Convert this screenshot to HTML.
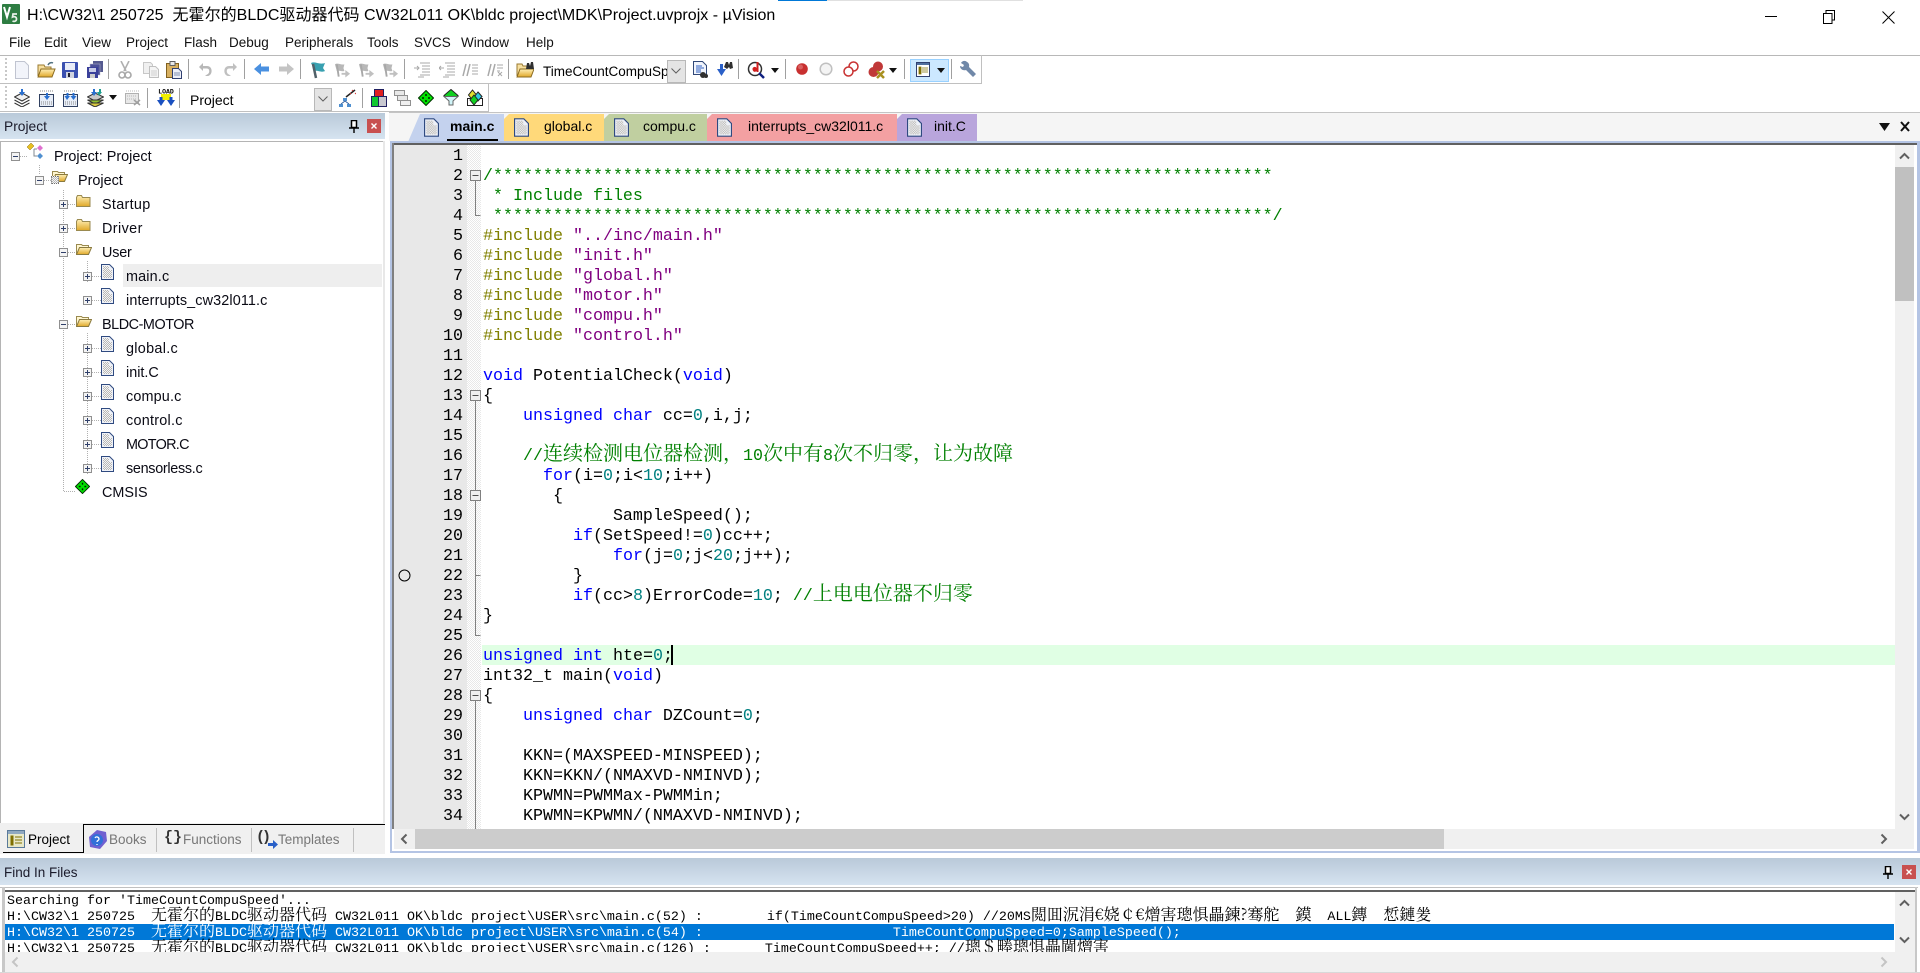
<!DOCTYPE html>
<html><head><meta charset="utf-8"><title>µVision</title>
<style>
html,body{margin:0;padding:0;background:#fff}
#r{position:relative;width:1920px;height:973px;overflow:hidden;background:#fff;font-family:"Liberation Sans","Noto Sans CJK SC",sans-serif;color:#000}
#r div,#r span.a,#r svg.a{position:absolute}
.t{white-space:pre;line-height:20px;height:20px}
.m{font-size:13.5px;top:33px;color:#111}
.sep{width:1px;background:#a0a0a0}
.tr{font-size:14.4px;color:#0a0a14;margin-top:1px}
.tb{font-size:14px;top:113px;height:28px;line-height:27px}
.code{left:483px;width:1412px;height:20px;line-height:20px;margin-top:2px;font-family:"Liberation Mono",monospace;font-size:16.67px;white-space:pre;color:#000}
.ln{left:420px;width:43px;text-align:right;height:20px;line-height:20px;margin-top:2px;font-family:"Liberation Mono",monospace;font-size:16.67px;color:#000}
.code span{position:static}
.k{color:#0000ff}.n{color:#008080}.c{color:#008000}.p{color:#808000}.s{color:#800080}
.z{font-family:"Noto Serif CJK SC",serif;font-size:20px;line-height:0}
.o{left:7px;width:1888px;height:16px;line-height:16px;margin-top:2px;font-family:"Liberation Mono",monospace;font-size:13.33px;white-space:pre;color:#000}
.y{font-family:"Noto Serif CJK SC",serif;font-size:16px;line-height:0}
.hd{background:linear-gradient(#b9c9d9,#d6e3f0)}
</style></head><body><div id="r">
<svg width="0" height="0" style="position:absolute"><defs>
<pattern id="dt" width="2" height="2" patternUnits="userSpaceOnUse"><rect width="2" height="2" fill="#f4f4f4"/><rect width="1" height="1" fill="#b8b8b8"/><rect x="1" y="1" width="1" height="1" fill="#b8b8b8"/></pattern>
<linearGradient id="fo" x1="0" y1="0" x2="0" y2="1"><stop offset="0" stop-color="#fff0b8"/><stop offset="1" stop-color="#e0a828"/></linearGradient>
<symbol id="doc" viewBox="0 0 13 16"><path d="M.5.500h8l4 4v11H.5z" fill="#eef1f8" stroke="#2f4a80"/><path d="M2 2h6v4h3v8H2z" fill="url(#dt)"/></symbol>
<symbol id="fc" viewBox="0 0 15 12"><path d="M.5 2.500l1-2h4l1 2h7.500v9H.5z" fill="url(#fo)" stroke="#9a8a50"/></symbol>
<symbol id="fd" viewBox="0 0 16 12"><path d="M.5 11V1.500h5l1 1h6v2" fill="#fff6d0" stroke="#9a8a50"/><path d="M.5 11.500l3-7h12l-3 7z" fill="url(#fo)" stroke="#8a7a40"/></symbol>
<symbol id="pl" viewBox="0 0 9 9"><rect x=".5" y=".5" width="8" height="8" fill="#f4f4f4" stroke="#909090"/><path d="M2 4.500h5M4.500 2v5" stroke="#30406a"/></symbol>
<symbol id="mi" viewBox="0 0 9 9"><rect x=".5" y=".5" width="8" height="8" fill="#f4f4f4" stroke="#909090"/><path d="M2 4.500h5" stroke="#30406a"/></symbol>
<symbol id="gd" viewBox="0 0 16 16"><path d="M8 .5 15.500 8 8 15.500 .5 8z" fill="#00e000" stroke="#003000"/><path d="M8 4v2M8 10v2M4 8h2M10 8h2" stroke="#002000" stroke-width="1.500"/></symbol>
<symbol id="da" viewBox="0 0 8 5"><path d="M0 0h8L4 5z" fill="#111"/></symbol>
<symbol id="hand" viewBox="0 0 18 18"><path d="M1 3c3-2 6 1 10 0l-1 4 1 3c-3 1-6-1-8 0z" fill="#b8b8b8"/><path d="M3 3l2 13" stroke="#a8a8a8" stroke-width="2"/><path d="M8 12h4v-3l5 4-5 4v-3H8z" fill="#c0c0c0"/></symbol>
</defs></svg>

<!-- title bar -->
<div style="left:778px;top:0;width:49px;height:1px;background:#0078d7"></div>
<div style="left:827px;top:0;width:196px;height:1px;background:#e0e0e0"></div>
<svg class="a" style="left:2px;top:4px" width="18" height="20" viewBox="0 0 18 20"><rect width="18" height="20" rx="1" fill="#2e7d42"/><path d="M2 3l3 10 3-10" fill="none" stroke="#fff" stroke-width="2"/><path d="M15 10h-4l-.5 3c2-1 4 0 4 2s-2 3-4 2" fill="none" stroke="#e8f0e8" stroke-width="1.700"/></svg>
<div class="t" style="left:27px;top:6px;font-size:16px;letter-spacing:.03px">H:\CW32\1 250725&nbsp; 无霍尔的BLDC驱动器代码 CW32L011 OK\bldc project\MDK\Project.uvprojx - µVision</div>
<div style="left:1765px;top:16px;width:12px;height:1px;background:#000"></div>
<svg class="a" style="left:1823px;top:10px" width="12" height="14" viewBox="0 0 12 14"><path d="M3 3V.5h8.500V10H9" fill="none" stroke="#000"/><rect x=".5" y="3.500" width="8.500" height="10" fill="#fff" stroke="#000"/></svg>
<svg class="a" style="left:1882px;top:11px" width="13" height="13"><path d="M.5.500l12 12M12.500.500l-12 12" stroke="#000" fill="none"/></svg>

<!-- menu -->
<div class="m t" style="left:9px">File</div><div class="m t" style="left:44px">Edit</div><div class="m t" style="left:82px">View</div><div class="m t" style="left:126px">Project</div><div class="m t" style="left:184px">Flash</div><div class="m t" style="left:229px">Debug</div><div class="m t" style="left:285px">Peripherals</div><div class="m t" style="left:367px">Tools</div><div class="m t" style="left:414px">SVCS</div><div class="m t" style="left:461px">Window</div><div class="m t" style="left:526px">Help</div>

<!-- toolbars -->
<div style="left:0;top:55px;width:1920px;height:1px;background:#b8b8b8"></div>
<div style="left:0;top:83px;width:982px;height:1px;background:#c0c0c0"></div>
<div style="left:981px;top:55px;width:1px;height:29px;background:#c0c0c0"></div>
<div style="left:0;top:111px;width:489px;height:1px;background:#c0c0c0"></div>
<div style="left:488px;top:84px;width:1px;height:28px;background:#c0c0c0"></div>
<div style="left:5px;top:58px;width:1px;height:22px;border-left:2px dotted #c8c8c8"></div>
<div style="left:5px;top:86px;width:1px;height:22px;border-left:2px dotted #c8c8c8"></div>
<!-- separators -->
<div class="sep" style="left:108px;top:59px;height:20px"></div><div class="sep" style="left:188px;top:59px;height:20px"></div><div class="sep" style="left:244px;top:59px;height:20px"></div><div class="sep" style="left:300px;top:59px;height:20px"></div><div class="sep" style="left:404px;top:59px;height:20px"></div><div class="sep" style="left:508px;top:59px;height:20px"></div><div class="sep" style="left:738px;top:59px;height:20px"></div><div class="sep" style="left:785px;top:59px;height:20px"></div><div class="sep" style="left:904px;top:59px;height:20px"></div><div class="sep" style="left:951px;top:59px;height:20px"></div>
<div class="sep" style="left:147px;top:88px;height:20px"></div><div class="sep" style="left:179px;top:88px;height:20px"></div><div class="sep" style="left:362px;top:88px;height:20px"></div>

<!-- toolbar 1 icons -->
<svg class="a" style="left:15px;top:61px" width="14" height="18" viewBox="0 0 14 18"><path d="M.5.500h9l4 4v13H.5z" fill="#f2f4fa" stroke="#c0c4d0"/></svg>
<svg class="a" style="left:37px;top:61px" width="19" height="17" viewBox="0 0 19 17"><path d="M1 15V4h6l1 2h6v2" fill="#f8e0a0" stroke="#9a7a30"/><path d="M1 16l3-8h14l-3 8z" fill="url(#fo)" stroke="#8a6a20"/><path d="M11 4c1-2 3-3 5-2" fill="none" stroke="#507080" stroke-width="1.500"/></svg>
<svg class="a" style="left:62px;top:62px" width="16" height="16" viewBox="0 0 16 16"><rect width="16" height="16" rx="1" fill="#3a50b0"/><rect x="3" y="1" width="10" height="7" fill="#e8ecf8"/><rect x="4" y="10" width="8" height="6" fill="#d0d4e0"/><rect x="6" y="11" width="2" height="4" fill="#223"/></svg>
<svg class="a" style="left:87px;top:61px" width="16" height="17" viewBox="0 0 16 17"><rect x="6" width="10" height="11" fill="#555a90"/><rect x="3" y="3" width="10" height="11" fill="#4a4f98" stroke="#bbc" stroke-width=".5"/><rect y="6" width="11" height="11" fill="#3a409a"/><rect x="2" y="7" width="7" height="4" fill="#c8cce8"/><rect x="3" y="13" width="5" height="4" fill="#ccc"/></svg>
<svg class="a" style="left:118px;top:61px" width="14" height="18" viewBox="0 0 14 18"><path d="M3 0l5 10M11 0L6 10" stroke="#b0b0b0" stroke-width="1.600" fill="none"/><circle cx="4" cy="14" r="3" fill="none" stroke="#a8a8a8" stroke-width="1.600"/><circle cx="10" cy="14" r="3" fill="none" stroke="#a8a8a8" stroke-width="1.600"/></svg>
<svg class="a" style="left:143px;top:62px" width="16" height="16" viewBox="0 0 16 16"><path d="M.5.500h7l2 2v9H.5z" fill="#f0f0f0" stroke="#c8c8c8"/><path d="M6.500 4.500h6l3 3v8h-9z" fill="#f4f4f4" stroke="#c0c0c0"/><path d="M8 9h6M8 11h6M8 13h6" stroke="#d0d0d0"/></svg>
<svg class="a" style="left:166px;top:61px" width="16" height="18" viewBox="0 0 16 18"><rect x=".5" y="2.500" width="12" height="14" fill="#d8b060" stroke="#806020"/><rect x="4" y=".5" width="5" height="4" fill="#e8e8e8" stroke="#606060"/><path d="M6.500 7.500h6l3 3v7h-9z" fill="#eef0f8" stroke="#304070"/><path d="M8 12h6M8 14h6" stroke="#8090b0"/></svg>
<svg class="a" style="left:198px;top:62px" width="15" height="16" viewBox="0 0 15 16"><path d="M5 1L1 5l4 4V6.500h4c3 0 3 5 0 6l-2 1.500h3c5-1 5-10-1-10H5z" fill="#b8b8b8"/></svg>
<svg class="a" style="left:223px;top:62px" width="15" height="16" viewBox="0 0 15 16"><path d="M10 1l4 4-4 4V6.500H6c-3 0-3 5 0 6l2 1.500H5C0 13 0 4 6 4h4z" fill="#c0c0c0"/></svg>
<svg class="a" style="left:254px;top:62px" width="15" height="14" viewBox="0 0 15 14"><path d="M0 7l7-6v3.500h8v5H7V13z" fill="#4a90e0"/></svg>
<svg class="a" style="left:279px;top:62px" width="15" height="14" viewBox="0 0 15 14"><path d="M15 7L8 1v3.500H0v5h8V13z" fill="#c4c4c4"/></svg>
<svg class="a" style="left:310px;top:61px" width="16" height="18" viewBox="0 0 16 18"><path d="M1 2c4-2 8 2 14 0l-2 5 2 3c-4 2-7-1-10 0z" fill="#38a0b0"/><path d="M3 3l3 14" stroke="#506068" stroke-width="2.500"/></svg>
<svg class="a" style="left:334px;top:61px" width="17" height="18"><use href="#hand"/></svg>
<svg class="a" style="left:358px;top:61px" width="17" height="18"><use href="#hand"/></svg>
<svg class="a" style="left:382px;top:61px" width="17" height="18"><use href="#hand"/></svg>
<svg class="a" style="left:414px;top:62px" width="17" height="16" viewBox="0 0 17 16" stroke="#a8a8a8" fill="none"><path d="M6 1h10M8 4h8M8 7h8M8 10h8M6 13h10M4 15h6"/><path d="M0 6h5M3 4l2 2-2 2"/></svg>
<svg class="a" style="left:439px;top:62px" width="17" height="16" viewBox="0 0 17 16" stroke="#a8a8a8" fill="none"><path d="M6 1h10M8 4h8M8 7h8M8 10h8M6 13h10M4 15h6"/><path d="M0 6h5M2 4L0 6l2 2"/></svg>
<svg class="a" style="left:462px;top:62px" width="17" height="16" viewBox="0 0 17 16" stroke="#a8a8a8" fill="none"><path d="M1 14L4 2M5 14L8 2" stroke-width="1.500"/><path d="M10 3h6M10 6h6M10 9h6M10 12h6"/></svg>
<svg class="a" style="left:487px;top:62px" width="17" height="16" viewBox="0 0 17 16" stroke="#a8a8a8" fill="none"><path d="M1 14L4 2M5 14L8 2" stroke-width="1.500"/><path d="M10 3h6M10 6h6M10 9h3M11 10l4 4M15 10l-4 4"/></svg>
<svg class="a" style="left:516px;top:61px" width="18" height="17" viewBox="0 0 18 17"><path d="M1 15V3h5l1 2h5v3" fill="#f8e0a0" stroke="#9a7a30"/><path d="M1 16l3-8h14l-3 8z" fill="url(#fo)" stroke="#8a6a20"/><path d="M10 8l1-6h2l1 3 1-4h2l1 7z" fill="#303030"/></svg>
<div class="t" style="left:543px;top:62px;width:124px;overflow:hidden;font-size:13.5px;color:#000">TimeCountCompuSpeed</div>
<div style="left:667px;top:60px;width:17px;height:21px;background:#e4e4e4;border:1px solid #b8b8b8"></div>
<svg class="a" style="left:671px;top:68px" width="10" height="6"><path d="M.5.500L5 5l4.500-4.500" fill="none" stroke="#606060"/></svg>
<svg class="a" style="left:693px;top:61px" width="15" height="18" viewBox="0 0 15 18"><path d="M.5.500h9l4 4v9H.5z" fill="#f0f4fc" stroke="#304878"/><path d="M3 5h6M3 7h8M3 9h5M3 11h5" stroke="#3060c0"/><circle cx="10" cy="14" r="3" fill="#303030"/><circle cx="13" cy="15" r="2" fill="#303030"/></svg>
<svg class="a" style="left:715px;top:61px" width="18" height="18" viewBox="0 0 18 18"><path d="M2 8h3V3h3v5h3l-4.500 7z" fill="#2a60c8"/><path d="M9 6l2-5h2l1 3 1-3h2l1 6-3 1-1-2-2 2z" fill="#303030"/></svg>
<svg class="a" style="left:747px;top:61px" width="18" height="18" viewBox="0 0 18 18"><circle cx="8" cy="8" r="6.500" fill="#fff" stroke="#303030" stroke-width="1.500"/><path d="M5.500 8c0-2 3-3 4-1V1h2v10H9.500v-1c-2 2-4 0-4-2z" fill="#d02020"/><path d="M12 12l5 5" stroke="#102080" stroke-width="2.500"/></svg>
<svg class="a" style="left:771px;top:68px" width="8" height="5"><use href="#da"/></svg>
<svg class="a" style="left:795px;top:62px" width="14" height="14"><circle cx="7" cy="7" r="5.800" fill="#c83030"/><circle cx="5.500" cy="5" r="2.500" fill="#d86060"/></svg>
<svg class="a" style="left:819px;top:62px" width="14" height="14"><circle cx="7" cy="7" r="5.800" fill="#f4f4f4" stroke="#c0c0c0" stroke-width="1.500"/></svg>
<svg class="a" style="left:843px;top:61px" width="16" height="16"><circle cx="10.500" cy="5.500" r="4.500" fill="#fff" stroke="#c83030" stroke-width="1.500"/><circle cx="5.500" cy="10.500" r="4.500" fill="#fff" stroke="#c83030" stroke-width="1.500"/></svg>
<svg class="a" style="left:868px;top:61px" width="18" height="18"><circle cx="10" cy="5.500" r="5" fill="#c03838"/><circle cx="5.500" cy="11" r="5" fill="#c03838"/><path d="M9 10l7 7M16 10l-7 7" stroke="#a89020" stroke-width="2.500"/></svg>
<svg class="a" style="left:889px;top:68px" width="8" height="5"><use href="#da"/></svg>
<div style="left:910px;top:59px;width:37px;height:21px;background:#cce8ff;border:1px solid #99d1ff"></div>
<svg class="a" style="left:916px;top:62px" width="14" height="15" viewBox="0 0 14 15"><rect x=".5" y=".5" width="13" height="14" fill="#fff" stroke="#304070"/><rect x="1" y="1" width="12" height="2" fill="#5070a0"/><path d="M3 5h2v7H3zM6 6h6M6 8h6M6 10h6" fill="#807000" stroke="#807000" stroke-width=".8"/></svg>
<svg class="a" style="left:937px;top:68px" width="8" height="5"><use href="#da"/></svg>
<svg class="a" style="left:960px;top:60px" width="18" height="18" viewBox="0 0 18 18"><path d="M7 2C5 0 2 1 1 3l3 2-1 2-3-1c0 3 3 5 6 4l7 7 3-3-7-7c.5-2 0-4-2-5z" fill="#7088a8"/></svg>

<!-- toolbar 2 icons -->
<svg class="a" style="left:14px;top:89px" width="16" height="18" viewBox="0 0 16 18"><path d="M.5 8L8 4l7.500 4L8 12z" fill="#f0f0f0" stroke="#333"/><path d="M.5 11L8 15l7.500-4M.5 14L8 18l7.500-4" fill="none" stroke="#333"/><path d="M5 3h2V0h2v3h2L8 7z" fill="#2a70d0"/></svg>
<svg class="a" style="left:39px;top:89px" width="15" height="18" viewBox="0 0 15 18"><rect x=".5" y="5.500" width="14" height="12" fill="#e8eef8" stroke="#304060"/><path d="M1 2h13" stroke="#888" stroke-dasharray="1 1"/><path d="M5 7h2V4h2v3h2l-3 4z" fill="#2a70d0"/><path d="M2 13h11M2 15h11" stroke="#888" stroke-dasharray="1 1"/></svg>
<svg class="a" style="left:63px;top:89px" width="15" height="18" viewBox="0 0 15 18"><rect x=".5" y="5.500" width="14" height="12" fill="#e8eef8" stroke="#304060"/><path d="M1 2h13" stroke="#888" stroke-dasharray="1 1"/><path d="M1.500 7h2V4h2v3h1.500l-3 4zM7.500 7h2V4h2v3h2l-3 4z" fill="#2a70d0"/><path d="M2 13h11M2 15h11" stroke="#888" stroke-dasharray="1 1"/></svg>
<svg class="a" style="left:87px;top:89px" width="17" height="18" viewBox="0 0 17 18"><path d="M.5 8L8 4l8.500 4L8 12z" fill="#c8c8c8" stroke="#333"/><path d="M.5 11L8 15l8.500-4z" fill="#90c030" stroke="#333"/><path d="M.5 14L8 18l8.500-4z" fill="#d8c840" stroke="#333"/><path d="M4 3h2V0h2v3h2L7 7z" fill="#2a70d0"/><path d="M10 3h2V0h2v3h1l-3 4z" fill="#20a090"/></svg>
<svg class="a" style="left:109px;top:95px" width="8" height="5"><use href="#da"/></svg>
<svg class="a" style="left:125px;top:89px" width="16" height="17" viewBox="0 0 16 17"><rect x=".5" y="4.500" width="13" height="10" fill="#e8e8e8" stroke="#b0b0b0"/><path d="M1 2h13M2 7h10M2 10h10" stroke="#b8b8b8" stroke-dasharray="1 1"/><path d="M9 11l6 5M15 11l-6 5" stroke="#a0a0a0" stroke-width="1.500"/></svg>
<svg class="a" style="left:157px;top:88px" width="18" height="20" viewBox="0 0 18 20"><rect x="4" y="6" width="10" height="6" fill="#f0f000"/><path d="M0 12h2.500v-3h3v3H8l-4 6zM10 12h2.500v-3h3v3H18l-4 6z" fill="#1a50c0"/><text x="9" y="5.500" font-family="Liberation Mono,monospace" font-size="6.500" font-weight="700" text-anchor="middle" fill="#000">LOAD</text></svg>
<div class="t" style="left:190px;top:90px;font-size:14px">Project</div>
<div style="left:314px;top:88px;width:16px;height:21px;background:#e4e4e4;border:1px solid #b8b8b8"></div>
<svg class="a" style="left:318px;top:96px" width="10" height="6"><path d="M.5.500L5 5l4.500-4.500" fill="none" stroke="#606060"/></svg>
<svg class="a" style="left:339px;top:89px" width="17" height="18" viewBox="0 0 17 18"><path d="M7 8l9-7" stroke="#222" stroke-width="1.500"/><path d="M13 1l1 1M16 4l1 1M11 4l1 1" stroke="#d03030"/><rect x="4" y="9" width="4" height="3" fill="#5090d0"/><rect x="0" y="15" width="4" height="3" fill="#5090d0"/><rect x="8" y="15" width="4" height="3" fill="#5090d0"/><path d="M6 12l-4 3M6 12l4 3" stroke="#3060a0"/></svg>
<svg class="a" style="left:371px;top:89px" width="16" height="18" viewBox="0 0 16 18"><rect x="3.500" y=".5" width="9" height="9" fill="#e02020" stroke="#202060"/><rect x=".5" y="7.500" width="7" height="10" fill="#10c830" stroke="#202060"/><rect x="7.500" y="7.500" width="8" height="10" fill="#c8c8d0" stroke="#202060"/></svg>
<svg class="a" style="left:394px;top:90px" width="17" height="16" viewBox="0 0 17 16"><rect x=".5" y=".5" width="10" height="5" fill="#e8e8e8" stroke="#909090"/><rect x="3.500" y="5.500" width="10" height="5" fill="#e8e8e8" stroke="#909090"/><rect x="6.500" y="10.500" width="10" height="5" fill="#f0f0f0" stroke="#909090"/></svg>
<svg class="a" style="left:418px;top:90px" width="16" height="16"><use href="#gd"/></svg>
<svg class="a" style="left:443px;top:89px" width="16" height="17" viewBox="0 0 16 17"><path d="M8 .5l7 6-1 1H2L1 6.500z" fill="#10d020" stroke="#222"/><path d="M1 7.500h14L10 12v4H6v-4z" fill="#d0f4f8" stroke="#666"/></svg>
<svg class="a" style="left:467px;top:89px" width="16" height="17" viewBox="0 0 16 17"><rect x=".5" y="9.500" width="15" height="7" fill="#fff" stroke="#222"/><path d="M5.500 1L9.500 6 5.500 11 1.500 6z" fill="#e0e030" stroke="#222"/><path d="M11 3l4 4.500-4 4.500-3.500-4.500z" fill="#30c8e0" stroke="#222"/><path d="M7 6l4 5-4 5-4-5z" fill="#10d020" stroke="#222"/></svg>

<!-- project panel -->
<div class="hd" style="left:0;top:113px;width:385px;height:26px"></div>
<div class="t" style="left:4px;top:117px;font-size:13.8px;color:#1a1a2a">Project</div>
<svg class="a" style="left:349px;top:120px" width="10" height="13" viewBox="0 0 10 13"><path d="M2.500.5h5v7h-5z" fill="#fff" stroke="#000" stroke-width="1.500"/><path d="M0 8h10M5 8v5" stroke="#000" stroke-width="1.400"/></svg>
<div style="left:367px;top:119px;width:14px;height:14px;background:#c85050"></div>
<svg class="a" style="left:371px;top:123px" width="6" height="6"><path d="M.5.500l5 5M5.500.5l-5 5" stroke="#fff" stroke-width="1.400"/></svg>
<div style="left:0;top:141px;width:385px;height:682px;background:#fff;border-top:1px solid #b4b4b4;border-left:1px solid #b4b4b4;box-sizing:border-box"></div>
<div style="left:383px;top:141px;width:2px;height:682px;background:#e8e8e8"></div>

<!-- tree lines -->
<svg class="a" style="left:0;top:141px" width="130" height="360" viewBox="0 141 130 360" fill="none" stroke="#b0b0b0" stroke-dasharray="1 1">
<path d="M20 156.500h8M39.500 165v10M44 180.500h8M63.500 190v301.500H76M68 204.500h8M68 228.500h8M68 252.500h8M68 324.500h8M87.500 261v22M87.500 333v142M92 276.500h9M92 300.500h9M92 348.500h9M92 372.500h9M92 396.500h9M92 420.500h9M92 444.500h9M92 468.500h9"/></svg>
<svg class="a" style="left:11px;top:152px" width="9" height="9"><use href="#mi"/></svg>
<svg class="a" style="left:35px;top:176px" width="9" height="9"><use href="#mi"/></svg>
<svg class="a" style="left:59px;top:200px" width="9" height="9"><use href="#pl"/></svg>
<svg class="a" style="left:59px;top:224px" width="9" height="9"><use href="#pl"/></svg>
<svg class="a" style="left:59px;top:248px" width="9" height="9"><use href="#mi"/></svg>
<svg class="a" style="left:59px;top:320px" width="9" height="9"><use href="#mi"/></svg>
<svg class="a" style="left:83px;top:272px" width="9" height="9"><use href="#pl"/></svg>
<svg class="a" style="left:83px;top:296px" width="9" height="9"><use href="#pl"/></svg>
<svg class="a" style="left:83px;top:344px" width="9" height="9"><use href="#pl"/></svg>
<svg class="a" style="left:83px;top:368px" width="9" height="9"><use href="#pl"/></svg>
<svg class="a" style="left:83px;top:392px" width="9" height="9"><use href="#pl"/></svg>
<svg class="a" style="left:83px;top:416px" width="9" height="9"><use href="#pl"/></svg>
<svg class="a" style="left:83px;top:440px" width="9" height="9"><use href="#pl"/></svg>
<svg class="a" style="left:83px;top:464px" width="9" height="9"><use href="#pl"/></svg>
<svg class="a" style="left:27px;top:143px" width="16" height="16" viewBox="0 0 16 16"><path d="M0 4l4-4 3 3-4 4z" fill="#e8c020" stroke="#907010" stroke-width=".5"/><path d="M10 5l3-3 3 3-3 3z" fill="#e070d0"/><path d="M10 13l3-3 3 3-3 3z" fill="#5090d0"/><path d="M7 6h3M7 6v7h3" fill="none" stroke="#808890"/></svg>
<svg class="a" style="left:52px;top:170px" width="16" height="12"><use href="#fd"/></svg>
<svg class="a" style="left:51px;top:176px" width="8" height="8"><rect width="8" height="8" fill="url(#dt)"/><path d="M0 0h8v8H0z" fill="none" stroke="#222" stroke-dasharray="1 1"/></svg>
<svg class="a" style="left:76px;top:195px" width="15" height="12"><use href="#fc"/></svg>
<svg class="a" style="left:76px;top:219px" width="15" height="12"><use href="#fc"/></svg>
<svg class="a" style="left:76px;top:243px" width="16" height="12"><use href="#fd"/></svg>
<svg class="a" style="left:76px;top:315px" width="16" height="12"><use href="#fd"/></svg>
<svg class="a" style="left:101px;top:264px" width="13" height="16"><use href="#doc"/></svg>
<svg class="a" style="left:101px;top:288px" width="13" height="16"><use href="#doc"/></svg>
<svg class="a" style="left:101px;top:336px" width="13" height="16"><use href="#doc"/></svg>
<svg class="a" style="left:101px;top:360px" width="13" height="16"><use href="#doc"/></svg>
<svg class="a" style="left:101px;top:384px" width="13" height="16"><use href="#doc"/></svg>
<svg class="a" style="left:101px;top:408px" width="13" height="16"><use href="#doc"/></svg>
<svg class="a" style="left:101px;top:432px" width="13" height="16"><use href="#doc"/></svg>
<svg class="a" style="left:101px;top:456px" width="13" height="16"><use href="#doc"/></svg>
<svg class="a" style="left:75px;top:479px" width="15" height="15"><use href="#gd"/></svg>
<div style="left:123px;top:264px;width:259px;height:23px;background:#eeeeee"></div>
<div class="t tr" style="left:54px;top:146px">Project: Project</div>
<div class="t tr" style="left:78px;top:170px">Project</div>
<div class="t tr" style="left:102px;top:194px;letter-spacing:.3px">Startup</div>
<div class="t tr" style="left:102px;top:218px;letter-spacing:.4px">Driver</div>
<div class="t tr" style="left:102px;top:242px;letter-spacing:-.2px">User</div>
<div class="t tr" style="left:126px;top:266px;letter-spacing:.15px">main.c</div>
<div class="t tr" style="left:126px;top:290px;letter-spacing:.12px">interrupts_cw32l011.c</div>
<div class="t tr" style="left:102px;top:314px;letter-spacing:-.45px">BLDC-MOTOR</div>
<div class="t tr" style="left:126px;top:338px;letter-spacing:.3px">global.c</div>
<div class="t tr" style="left:126px;top:362px">init.C</div>
<div class="t tr" style="left:126px;top:386px;letter-spacing:.15px">compu.c</div>
<div class="t tr" style="left:126px;top:410px;letter-spacing:.25px">control.c</div>
<div class="t tr" style="left:126px;top:434px;letter-spacing:-.7px">MOTOR.C</div>
<div class="t tr" style="left:126px;top:458px;letter-spacing:-.3px">sensorless.c</div>
<div class="t tr" style="left:102px;top:482px">CMSIS</div>

<!-- panel bottom tabs -->
<div style="left:0;top:823px;width:385px;height:31px;background:#f0f0f0"></div>
<div style="left:83px;top:824px;width:302px;height:1px;background:#000"></div>
<div style="left:83px;top:824px;width:1px;height:29px;background:#000"></div>
<div style="left:3px;top:852px;width:81px;height:1px;background:#000"></div>
<svg class="a" style="left:7px;top:830px" width="18" height="18" viewBox="0 0 18 18"><rect x=".5" y=".5" width="17" height="17" fill="#e8e8c8" stroke="#5a7a9a"/><rect x="1" y="1" width="16" height="3" fill="#90a8c0"/><path d="M4 6h2v9H4zM8 7h7M8 10h7M8 13h7" fill="#807000" stroke="#807000"/></svg>
<div class="t" style="left:28px;top:830px;font-size:13.5px">Project</div>
<svg class="a" style="left:87px;top:829px" width="21" height="21" viewBox="0 0 21 21"><path d="M2 8l8-7 9 2 1 9-7 8-10-2z" fill="#7060d0"/><circle cx="10" cy="11" r="6" fill="#3070d8"/><path d="M8 9c1-2 4-1 4 1s-2 1-2 3M10 15v1" stroke="#fff" fill="none" stroke-width="1.300"/></svg>
<div class="t" style="left:109px;top:830px;font-size:13.5px;color:#777">Books</div>
<div class="sep" style="left:156px;top:828px;height:24px;background:#c0c0c0"></div>
<div class="t" style="left:164px;top:828px;font-size:15px;font-weight:700;color:#333;font-family:'Liberation Mono',monospace">{}</div>
<div class="t" style="left:183px;top:830px;font-size:13.5px;color:#777">Functions</div>
<div class="sep" style="left:251px;top:828px;height:24px;background:#c0c0c0"></div>
<div class="t" style="left:256px;top:828px;font-size:15px;font-weight:700;color:#333;font-family:'Liberation Mono',monospace;letter-spacing:-3px">()</div>
<svg class="a" style="left:268px;top:840px" width="10" height="9"><path d="M0 3h5V0l5 4.500L5 9V6H0z" fill="#2a60c8"/></svg>
<div class="t" style="left:278px;top:830px;font-size:13.5px;color:#777">Templates</div>
<div class="sep" style="left:353px;top:828px;height:24px;background:#c0c0c0"></div>

<!-- tab strip -->
<div style="left:389px;top:112px;width:1531px;height:29px;background:#f5f5f5;border-top:1px solid #c4c4c4;box-sizing:border-box"></div>
<div style="left:408px;top:114px;width:96px;height:28px;background:#c4d2ee;clip-path:polygon(0 100%,12px 0,100% 0,100% 100%)"></div>
<div style="left:504px;top:114px;width:100px;height:28px;background:#ffd97a;clip-path:polygon(0 100%,0 5px,5px 0,100% 0,100% 100%)"></div>
<div style="left:604px;top:114px;width:103px;height:28px;background:#c0cfa0;clip-path:polygon(0 100%,0 5px,5px 0,100% 0,100% 100%)"></div>
<div style="left:707px;top:114px;width:190px;height:28px;background:#f3a0a2;clip-path:polygon(0 100%,0 5px,5px 0,100% 0,100% 100%)"></div>
<div style="left:897px;top:114px;width:80px;height:28px;background:#b9a5dc;clip-path:polygon(0 100%,0 5px,5px 0,100% 0,100% 100%)"></div>
<div style="left:447px;top:139px;width:51px;height:2px;background:#000"></div>
<svg class="a" style="left:424px;top:118px" width="15" height="19"><use href="#doc"/></svg>
<svg class="a" style="left:514px;top:118px" width="15" height="19"><use href="#doc"/></svg>
<svg class="a" style="left:614px;top:118px" width="15" height="19"><use href="#doc"/></svg>
<svg class="a" style="left:717px;top:118px" width="15" height="19"><use href="#doc"/></svg>
<svg class="a" style="left:907px;top:118px" width="15" height="19"><use href="#doc"/></svg>
<div class="t tb" style="left:450px;font-weight:700">main.c</div>
<div class="t tb" style="left:544px">global.c</div>
<div class="t tb" style="left:643px">compu.c</div>
<div class="t tb" style="left:748px">interrupts_cw32l011.c</div>
<div class="t tb" style="left:934px">init.C</div>
<svg class="a" style="left:1879px;top:123px" width="11" height="8"><path d="M0 0h11L5.500 8z" fill="#111"/></svg>
<svg class="a" style="left:1900px;top:121px" width="10" height="11"><path d="M1 1l8 9M9 1l-8 9" stroke="#111" stroke-width="2"/></svg>

<!-- editor frame -->
<div style="left:390px;top:141px;width:1530px;height:2px;background:#b4c4e4"></div>
<div style="left:392px;top:143px;width:1525px;height:2px;background:#606060"></div>
<div style="left:390px;top:141px;width:2px;height:712px;background:#b4c4e4"></div>
<div style="left:392px;top:143px;width:2px;height:686px;background:#808080"></div>
<div style="left:1917px;top:141px;width:3px;height:712px;background:#b4c4e4"></div>
<div style="left:390px;top:851px;width:1530px;height:2px;background:#b4c4e4"></div>
<div style="left:394px;top:145px;width:73px;height:684px;background:#e8e8e8"></div>
<div style="left:467px;top:145px;width:14px;height:684px;background:#f0f0f0 conic-gradient(#fff 25%,#e8e8e8 0 50%,#fff 0 75%,#e8e8e8 0) 0 0/2px 2px"></div>
<div style="left:482px;top:645px;width:1413px;height:20px;background:#e0ffe4"></div>
<div style="left:671px;top:645px;width:2px;height:20px;background:#000"></div>

<svg class="a" style="left:398px;top:569px" width="13" height="13"><circle cx="6.500" cy="6.500" r="5.500" fill="none" stroke="#000"/></svg>
<svg class="a" style="left:469px;top:145px" width="13" height="684" viewBox="469 145 13 684" fill="none" stroke="#808080">
<path d="M475.500 180v35.500h5M475.500 401v94M475.500 501v134.500h5M475.500 575.500h5M475.500 701v128"/>
<path d="M470.500 170.500h10v10h-10zM470.500 390.500h10v10h-10zM470.500 490.500h10v10h-10zM470.500 690.500h10v10h-10z" fill="#f0f0f0"/>
<path d="M472.500 175.500h6M472.500 395.500h6M472.500 495.500h6M472.500 695.500h6" stroke="#505050"/></svg>

<!-- line numbers -->
<div class="ln" style="top:145px">1</div><div class="ln" style="top:165px">2</div><div class="ln" style="top:185px">3</div><div class="ln" style="top:205px">4</div><div class="ln" style="top:225px">5</div><div class="ln" style="top:245px">6</div><div class="ln" style="top:265px">7</div><div class="ln" style="top:285px">8</div><div class="ln" style="top:305px">9</div><div class="ln" style="top:325px">10</div><div class="ln" style="top:345px">11</div><div class="ln" style="top:365px">12</div><div class="ln" style="top:385px">13</div><div class="ln" style="top:405px">14</div><div class="ln" style="top:425px">15</div><div class="ln" style="top:445px">16</div><div class="ln" style="top:465px">17</div><div class="ln" style="top:485px">18</div><div class="ln" style="top:505px">19</div><div class="ln" style="top:525px">20</div><div class="ln" style="top:545px">21</div><div class="ln" style="top:565px">22</div><div class="ln" style="top:585px">23</div><div class="ln" style="top:605px">24</div><div class="ln" style="top:625px">25</div><div class="ln" style="top:645px">26</div><div class="ln" style="top:665px">27</div><div class="ln" style="top:685px">28</div><div class="ln" style="top:705px">29</div><div class="ln" style="top:725px">30</div><div class="ln" style="top:745px">31</div><div class="ln" style="top:765px">32</div><div class="ln" style="top:785px">33</div><div class="ln" style="top:805px">34</div>

<!-- code -->
<div class="code c" style="top:165px">/******************************************************************************</div>
<div class="code c" style="top:185px"> * Include files</div>
<div class="code c" style="top:205px"> ******************************************************************************/</div>
<div class="code" style="top:225px"><span class="p">#include</span> <span class="s">"../inc/main.h"</span></div>
<div class="code" style="top:245px"><span class="p">#include</span> <span class="s">"init.h"</span></div>
<div class="code" style="top:265px"><span class="p">#include</span> <span class="s">"global.h"</span></div>
<div class="code" style="top:285px"><span class="p">#include</span> <span class="s">"motor.h"</span></div>
<div class="code" style="top:305px"><span class="p">#include</span> <span class="s">"compu.h"</span></div>
<div class="code" style="top:325px"><span class="p">#include</span> <span class="s">"control.h"</span></div>
<div class="code" style="top:365px"><span class="k">void</span> PotentialCheck(<span class="k">void</span>)</div>
<div class="code" style="top:385px">{</div>
<div class="code" style="top:405px">    <span class="k">unsigned</span> <span class="k">char</span> cc=<span class="n">0</span>,i,j;</div>
<div class="code c" style="top:445px">    //<span class="z">连续检测电位器检测，</span>10<span class="z">次中有</span>8<span class="z">次不归零，让为故障</span></div>
<div class="code" style="top:465px">      <span class="k">for</span>(i=<span class="n">0</span>;i&lt;<span class="n">10</span>;i++)</div>
<div class="code" style="top:485px">       {</div>
<div class="code" style="top:505px">             SampleSpeed();</div>
<div class="code" style="top:525px">         <span class="k">if</span>(SetSpeed!=<span class="n">0</span>)cc++;</div>
<div class="code" style="top:545px">             <span class="k">for</span>(j=<span class="n">0</span>;j&lt;<span class="n">20</span>;j++);</div>
<div class="code" style="top:565px">         }</div>
<div class="code" style="top:585px">         <span class="k">if</span>(cc&gt;<span class="n">8</span>)ErrorCode=<span class="n">10</span>; <span class="c">//<span class="z">上电电位器不归零</span></span></div>
<div class="code" style="top:605px">}</div>
<div class="code" style="top:645px"><span class="k">unsigned</span> <span class="k">int</span> hte=<span class="n">0</span>;</div>
<div class="code" style="top:665px">int32_t main(<span class="k">void</span>)</div>
<div class="code" style="top:685px">{</div>
<div class="code" style="top:705px">    <span class="k">unsigned</span> <span class="k">char</span> DZCount=<span class="n">0</span>;</div>
<div class="code" style="top:745px">    KKN=(MAXSPEED-MINSPEED);</div>
<div class="code" style="top:765px">    KKN=KKN/(NMAXVD-NMINVD);</div>
<div class="code" style="top:785px">    KPWMN=PWMMax-PWMMin;</div>
<div class="code" style="top:805px">    KPWMN=KPWMN/(NMAXVD-NMINVD);</div>

<!-- editor scrollbars -->
<div style="left:1895px;top:145px;width:19px;height:684px;background:#f0f0f0"></div>
<div style="left:1895px;top:167px;width:19px;height:134px;background:#c0c0c0"></div>
<svg class="a" style="left:1899px;top:152px" width="11" height="8"><path d="M1 6.500L5.500 2 10 6.500" fill="none" stroke="#606060" stroke-width="2"/></svg>
<svg class="a" style="left:1899px;top:813px" width="11" height="8"><path d="M1 1.500L5.500 6 10 1.500" fill="none" stroke="#606060" stroke-width="2"/></svg>
<div style="left:394px;top:829px;width:1520px;height:20px;background:#f0f0f0"></div>
<div style="left:415px;top:829px;width:1029px;height:20px;background:#cccccc"></div>
<svg class="a" style="left:400px;top:833px" width="8" height="12"><path d="M6.500 1.500L2 6l4.500 4.500" fill="none" stroke="#606060" stroke-width="2"/></svg>
<svg class="a" style="left:1880px;top:833px" width="8" height="12"><path d="M1.500 1.500L6 6l-4.500 4.500" fill="none" stroke="#606060" stroke-width="2"/></svg>

<!-- find in files -->
<div class="hd" style="left:0;top:858px;width:1920px;height:27px"></div>
<div class="t" style="left:4px;top:863px;font-size:13.5px;color:#1a1a2a">Find In Files</div>
<svg class="a" style="left:1883px;top:866px" width="10" height="13" viewBox="0 0 10 13"><path d="M2.500.5h5v7h-5z" fill="#fff" stroke="#000" stroke-width="1.500"/><path d="M0 8h10M5 8v5" stroke="#000" stroke-width="1.400"/></svg>
<div style="left:1902px;top:865px;width:14px;height:14px;background:#c85050"></div>
<svg class="a" style="left:1906px;top:869px" width="6" height="6"><path d="M.5.500l5 5M5.500.5l-5 5" stroke="#fff" stroke-width="1.400"/></svg>
<div style="left:0;top:887px;width:1918px;height:1px;background:#c0c0c0"></div>
<div style="left:3px;top:890px;width:1912px;height:2px;background:#606060"></div>
<div style="left:2px;top:887px;width:3px;height:86px;background:#c8c8c8"></div>
<div style="left:1915px;top:887px;width:2px;height:86px;background:#c8c8c8"></div>
<div style="left:5px;top:924px;width:1889px;height:16px;background:#0078d7"></div>
<div style="left:5px;top:892px;width:1890px;height:60px;overflow:hidden">
<div class="o" style="left:2px;top:0">Searching for 'TimeCountCompuSpeed'...</div>
<div class="o" style="left:2px;top:16px">H:\CW32\1 250725  <span class="y">无霍尔的</span>BLDC<span class="y">驱动器代码</span> CW32L011 OK\bldc project\USER\src\main.c(52) :        if(TimeCountCompuSpeed&gt;20) //20MS<span class="y">閲囬泦涓€娆￠€熷害璁惧畾鍊?骞舵</span>  <span class="y">鏌</span>  ALL<span class="y">鏄</span>  <span class="y">惁鏈夎</span></div>
<div class="o" style="left:2px;top:32px;color:#fff">H:\CW32\1 250725  <span class="y">无霍尔的</span>BLDC<span class="y">驱动器代码</span> CW32L011 OK\bldc project\USER\src\main.c(54) :                        <span style="margin-left:-2px">TimeCountCompuSpeed=0;SampleSpeed();</span></div>
<div class="o" style="left:2px;top:48px">H:\CW32\1 250725  <span class="y">无霍尔的</span>BLDC<span class="y">驱动器代码</span> CW32L011 OK\bldc project\USER\src\main.c(126) :       <span style="margin-left:-2px">TimeCountCompuSpeed++; //<span class="y">璁＄畻璁惧畾閫熷害</span></span></div>
</div>
<div style="left:1895px;top:892px;width:20px;height:60px;background:#f0f0f0"></div>
<svg class="a" style="left:1899px;top:899px" width="11" height="8"><path d="M1 6.500L5.500 2 10 6.500" fill="none" stroke="#606060" stroke-width="2"/></svg>
<svg class="a" style="left:1899px;top:936px" width="11" height="8"><path d="M1 1.500L5.500 6 10 1.500" fill="none" stroke="#606060" stroke-width="2"/></svg>
<div style="left:5px;top:952px;width:1910px;height:20px;background:#f0f0f0"></div>
<div style="left:0;top:972px;width:1920px;height:1px;background:#d8d8d8"></div>
<svg class="a" style="left:11px;top:956px" width="8" height="12"><path d="M6.500 1.500L2 6l4.500 4.500" fill="none" stroke="#c4c4c4" stroke-width="2"/></svg>
<svg class="a" style="left:1880px;top:956px" width="8" height="12"><path d="M1.500 1.500L6 6l-4.500 4.500" fill="none" stroke="#c4c4c4" stroke-width="2"/></svg>
</div></body></html>
